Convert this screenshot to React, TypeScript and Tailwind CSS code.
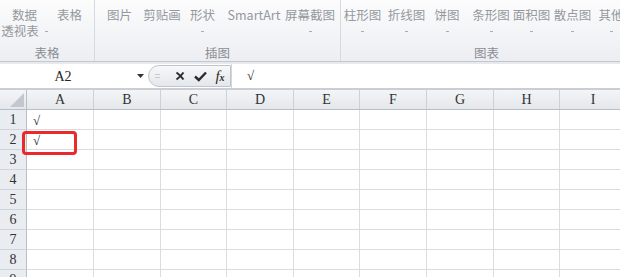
import React from 'react';

const cjk = { fontFamily: '"Noto Sans CJK SC", "Noto Sans", sans-serif' };

type Btn = { w: string; l1: string; l2?: string; arrow?: boolean };

const groups: { w: string; label: string; items: Btn[] }[] = [
  {
    w: 'w-[95px]',
    label: '表格',
    items: [
      { w: 'w-[49px]', l1: '数据', l2: '透视表', arrow: true },
      { w: 'w-[41px]', l1: '表格' },
    ],
  },
  {
    w: 'w-[246px]',
    label: '插图',
    items: [
      { w: 'w-[49px]', l1: '图片' },
      { w: 'w-[36px]', l1: '剪贴画' },
      { w: 'w-[45px]', l1: '形状', arrow: true },
      { w: 'w-[58px]', l1: 'SmartArt' },
      { w: 'w-[54px]', l1: '屏幕截图', arrow: true },
    ],
  },
  {
    w: 'w-[292px]',
    label: '图表',
    items: [
      { w: 'w-[43px]', l1: '柱形图', arrow: true },
      { w: 'w-[45px]', l1: '折线图', arrow: true },
      { w: 'w-[36px]', l1: '饼图', arrow: true },
      { w: 'w-[52px]', l1: '条形图', arrow: true },
      { w: 'w-[29px]', l1: '面积图', arrow: true },
      { w: 'w-[53px]', l1: '散点图', arrow: true },
      { w: 'w-[24px]', l1: '其他', arrow: true },
    ],
  },
];

const cols = [
  { l: 'A', w: 'w-[67px]' },
  { l: 'B', w: 'w-[67px]' },
  { l: 'C', w: 'w-[66px]' },
  { l: 'D', w: 'w-[67px]' },
  { l: 'E', w: 'w-[66px]' },
  { l: 'F', w: 'w-[67px]' },
  { l: 'G', w: 'w-[67px]' },
  { l: 'H', w: 'w-[66px]' },
  { l: 'I', w: 'w-[67px]' },
];

const rows = [1, 2, 3, 4, 5, 6, 7, 8, 9];

function Dash() {
  return <span className="inline-block w-[3px] h-px bg-[#a9adb2] align-middle" />;
}

function RibbonButton({ b }: { b: Btn }) {
  return (
    <div className={`${b.w} shrink-0 flex flex-col items-center pt-[7px] whitespace-nowrap`}>
      <div className="h-[16px] leading-[16px]">{b.l1}</div>
      <div className="h-[16px] leading-[16px] flex items-center gap-[6px]">
        {b.l2 && <span>{b.l2}</span>}
        {b.arrow && <Dash />}
      </div>
    </div>
  );
}

function Ribbon() {
  return (
    <div
      className="flex h-[62px] border-b border-[#c3c8cf] bg-gradient-to-b from-[#fcfcfd] to-[#eceef2] text-[12.5px] text-[#95989d]"
      style={cjk}
    >
      {groups.map((g) => (
        <div key={g.label} className={`${g.w} shrink-0 flex flex-col border-r border-[#d6dae0]`}>
          <div className="h-[45px] flex">
            {g.items.map((b) => (
              <RibbonButton key={b.l1} b={b} />
            ))}
          </div>
          <div className="h-[16px] leading-[16px] text-center text-[#8a8d92]">{g.label}</div>
        </div>
      ))}
    </div>
  );
}

function FormulaBar() {
  return (
    <div className="border-b-2 border-[#c9ced6]">
      <div className="h-[2px] bg-[#e6e9ed]" />
      <div className="flex h-[24px] bg-white items-center" style={{ fontFamily: '"Liberation Serif", serif' }}>
        <div className="w-[126px] text-center text-[14px] text-[#222]">A2</div>
        <div className="w-[22px] flex justify-end pr-[4px]">
          <svg width="7" height="4" viewBox="0 0 7 4">
            <path d="M0 0 H7 L3.5 4 Z" fill="#333" />
          </svg>
        </div>
        <div className="w-[83px] h-[22px] flex items-center pl-[2px] rounded-l-[11px] border border-[#c1c6cd] bg-gradient-to-b from-[#f7f8f9] to-[#e4e7eb]">
          <div className="w-[12px] flex justify-center">
            <svg width="5" height="4" viewBox="0 0 5 4">
              <path d="M0 0.5 H5 M0 3.5 H5" stroke="#c8ccd1" strokeWidth="1" />
            </svg>
          </div>
          <div className="w-[7px]" />
          <div className="w-[20px] flex justify-center">
            <svg width="10" height="10" viewBox="0 0 10 10">
              <path d="M1.5 1.5 Q5 4 8.5 8.5 M8.5 1.5 Q5 6 1.5 8.5" stroke="#2b2b2b" strokeWidth="2" fill="none" />
            </svg>
          </div>
          <div className="w-[20px] flex justify-center">
            <svg width="13" height="11" viewBox="0 0 13 11">
              <path d="M1 5.5 L4.8 9 L12 1.5" stroke="#2b2b2b" strokeWidth="2.4" fill="none" />
            </svg>
          </div>
          <div className="w-[20px] flex justify-center items-baseline italic text-[#2b2b2b]">
            <span className="text-[15px] leading-none">f</span>
            <span className="text-[10px] leading-none font-bold">x</span>
          </div>
        </div>
        <div className="flex-1 h-full border-l border-[#d3d7dc] pl-[15px] leading-[24px] text-[13px] text-[#222]">√</div>
      </div>
    </div>
  );
}

function Grid() {
  return (
    <div className="relative" style={{ fontFamily: '"Liberation Serif", serif' }}>
      <div className="flex h-[20px] border-b border-[#b7bec7] bg-gradient-to-b from-[#f4f5f7] to-[#e4e7eb]">
        <div className="w-[27px] shrink-0 border-r border-[#b7bec7] flex items-end justify-end pr-[2px] pb-[2px]">
          <svg width="14" height="14" viewBox="0 0 14 14">
            <path d="M0 14 L14 0 L14 14 Z" fill="#c3c8ce" />
          </svg>
        </div>
        {cols.map((c) => (
          <div
            key={c.l}
            className={`${c.w} shrink-0 border-r border-[#cdd2d8] flex items-center justify-center text-[14px] text-[#333]`}
          >
            {c.l}
          </div>
        ))}
      </div>
      {rows.map((r) => (
        <div key={r} className="flex h-[20px]">
          <div className="w-[27px] shrink-0 border-r border-b border-r-[#b7bec7] border-b-[#cfd4da] bg-[#e9ecf0] flex items-center justify-center text-[14px] text-[#333]">
            {r}
          </div>
          {cols.map((c) => (
            <div
              key={c.l}
              className={`${c.w} shrink-0 border-r border-b border-[#dadcdd] bg-white pl-[6px] leading-[21px] text-[13px] text-[#222]`}
            >
              {c.l === 'A' && (r === 1 || r === 2) ? '√' : ''}
            </div>
          ))}
        </div>
      ))}
      <div className="absolute left-[22px] top-[41px] w-[55px] h-[24px] border-[3px] border-[#e82a2e] rounded-[4px]" />
    </div>
  );
}

export default function App() {
  return (
    <div className="w-[620px] h-[277px] overflow-hidden bg-white">
      <Ribbon />
      <FormulaBar />
      <Grid />
    </div>
  );
}
